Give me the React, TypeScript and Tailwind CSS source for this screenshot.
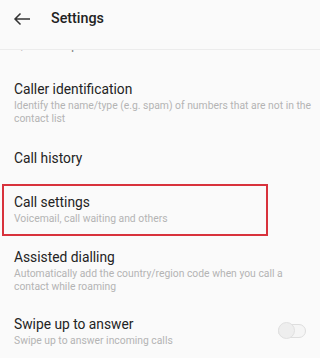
import { useState } from "react"

const font = { fontFamily: "Roboto, 'Liberation Sans', sans-serif" }

function Row({ title, sub, children }: { title: string; sub?: string; children?: React.ReactNode }) {
  return (
    <div className="flex items-center justify-between pl-[14px] pr-[4px]">
      <div className="min-w-0">
        <div className="text-[13.8px] leading-[20px] text-[#232323]">{title}</div>
        {sub && <div className="text-[10.35px] leading-[13px] text-[#b4b4b4]">{sub}</div>}
      </div>
      {children}
    </div>
  )
}

export default function App() {
  const [on, setOn] = useState(false)

  return (
    <div className="w-[320px] h-[358px] overflow-hidden bg-[#fafafa] flex flex-col" style={font}>
      {/* header */}
      <div className="h-[38px] flex items-center shrink-0">
        <svg width="18" height="14" viewBox="0 0 18 14" className="ml-[13px]" fill="none" stroke="#333" strokeWidth="1.5">
          <path d="M17 7H2M7.5 1.5L2 7l5.5 5.5" />
        </svg>
        <span className="ml-[20px] text-[14.3px] font-medium text-[#222]">Settings</span>
      </div>

      {/* scrolled content, top is hidden under the header */}
      <div className="h-[12px] shrink-0 border-b border-[#ececec]" />
      <div className="h-[4px] overflow-hidden shrink-0 px-[14px]">
        <div className="-mt-[16px] text-[13.8px] leading-[20px] text-[#8a8a8a]">Quick responses</div>
      </div>

      <div className="pt-[25px] flex flex-col">
        <Row title="Caller identification" sub="Identify the name/type (e.g. spam) of numbers that are not in the contact list" />

        <div className="pt-[23px]">
          <Row title="Call history" />
        </div>

        <div className="mt-[16px] ml-[2px] w-[266px] border-2 border-[#d8323c] pt-[6px] pb-[9px]">
          <div className="-ml-[4px]">
            <Row title="Call settings" sub="Voicemail, call waiting and others" />
          </div>
        </div>

        <div className="pt-[11px] pr-[6px]">
          <Row title="Assisted dialling" sub="Automatically add the country/region code when you call a contact while roaming" />
        </div>

        <div className="pt-[21px]">
          <div className="pr-[10px]">
            <Row title="Swipe up to answer" sub="Swipe up to answer incoming calls">
              <button
                onClick={() => setOn(!on)}
                className={`w-[28px] h-[14px] rounded-full border border-[#dedede] flex items-center ${on ? "bg-[#2d7bf4] justify-end" : "bg-[#f5f5f5] justify-start"}`}
              >
                <span className="w-[17px] h-[17px] -ml-[1px] rounded-full bg-[#eeeeee] border border-[#e0e0e0]" />
              </button>
            </Row>
          </div>
        </div>
      </div>
    </div>
  )
}
